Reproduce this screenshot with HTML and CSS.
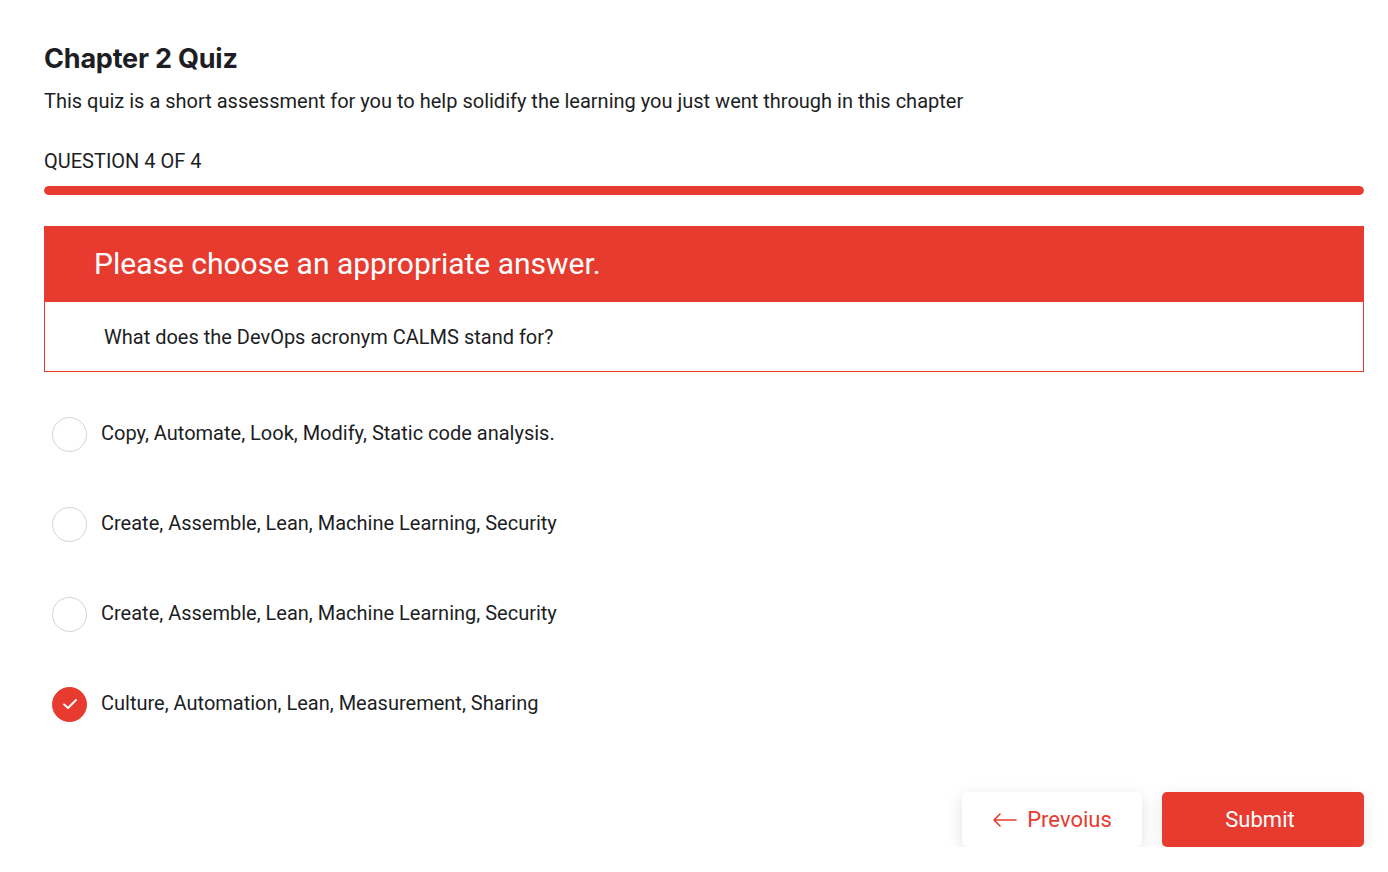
FILE: index.html
```html
<!DOCTYPE html>
<html>
<head>
<meta charset="utf-8">
<link rel="stylesheet" href="styles.css">
</head>
<body>
<main class="quiz">
  <h1 class="title">Chapter 2 Quiz</h1>
  <p class="subtitle">This quiz is a short assessment for you to help solidify the learning you just went through in this chapter</p>
  <div class="counter">QUESTION 4 OF 4</div>
  <div class="progress"><div class="progress-fill" style="width:100%"></div></div>
  <section class="question">
    <div class="question-head">Please choose an appropriate answer.</div>
    <div class="question-body">What does the DevOps acronym CALMS stand for?</div>
  </section>
  <ul class="options">
    <li class="option"><span class="radio"></span><span class="label">Copy, Automate, Look, Modify, Static code analysis.</span></li>
    <li class="option"><span class="radio"></span><span class="label">Create, Assemble, Lean, Machine Learning, Security</span></li>
    <li class="option"><span class="radio"></span><span class="label">Create, Assemble, Lean, Machine Learning, Security</span></li>
    <li class="option"><span class="radio checked"><svg width="18" height="18" viewBox="0 0 18 18"><path d="M3 9.4 L7 13 L15 5" fill="none" stroke="#fff" stroke-width="1.9" stroke-linecap="round" stroke-linejoin="round"/></svg></span><span class="label">Culture, Automation, Lean, Measurement, Sharing</span></li>
  </ul>
  <div class="actions">
    <button class="btn btn-prev"><svg width="26" height="14" viewBox="0 0 26 14"><path d="M24 7 H2 M8 1 L2 7 L8 13" fill="none" stroke="#e83b30" stroke-width="1.6" stroke-linecap="round" stroke-linejoin="round"/></svg><span>Prevoius</span></button>
    <button class="btn btn-submit">Submit</button>
  </div>
</main>
</body>
</html>
```
FILE: styles.css
```css
* { box-sizing: border-box; }
body {
  margin: 0;
  background: #fff;
  font-family: Roboto, "Liberation Sans", sans-serif;
  color: #1c1e24;
}
.quiz {
  padding: 42px 24px 0 44px;
}
.title {
  margin: 0;
  font-family: Inter, "Liberation Sans", sans-serif;
  font-weight: 700;
  font-size: 27px;
  line-height: 34px;
  letter-spacing: -0.2px;
  color: #1c1e24;
}
.subtitle {
  margin: 12px 0 0;
  font-size: 20px;
  line-height: 26px;
  color: #1c1e24;
}
.counter {
  margin-top: 36px;
  font-size: 20px;
  line-height: 22px;
  color: #1c1e24;
}
.progress {
  margin-top: 14px;
  height: 9px;
  border-radius: 5px;
  background: #f1f1f1;
  overflow: hidden;
}
.progress-fill {
  height: 100%;
  background: #e83b30;
  border-radius: 5px;
}
.question {
  margin-top: 31px;
  border: 1px solid #e83b30;
}
.question-head {
  background: #e83b30;
  color: #fff;
  height: 75px;
  padding-left: 49px;
  padding-bottom: 2px;
  display: flex;
  align-items: center;
  font-size: 30px;
}
.question-body {
  height: 69px;
  padding-left: 59px;
  display: flex;
  align-items: center;
  font-size: 20px;
}
.options {
  list-style: none;
  margin: 17px 0 0;
  padding: 0 0 0 8px;
}
.option {
  height: 90px;
  display: flex;
  align-items: center;
  gap: 14px;
  font-size: 20px;
}
.label {
  margin-top: -3px;
}
.radio {
  width: 35px;
  height: 35px;
  border-radius: 50%;
  border: 1px solid #d4d4d4;
  display: flex;
  align-items: center;
  justify-content: center;
  flex: none;
}
.radio.checked {
  background: #e83b30;
  border-color: #e83b30;
}
.actions {
  display: flex;
  justify-content: flex-end;
  gap: 20px;
  margin-top: 43px;
}
.btn {
  height: 55px;
  border: none;
  border-radius: 5px;
  font-family: Roboto, "Liberation Sans", sans-serif;
  font-size: 22px;
  display: flex;
  align-items: center;
  justify-content: center;
  cursor: pointer;
}
.btn-prev {
  width: 180px;
  background: #fff;
  color: #e83b30;
  gap: 9px;
  box-shadow: 0 4px 16px rgba(0,0,0,0.12);
}
.btn-submit {
  width: 202px;
  padding-right: 12px;
  background: #e83b30;
  color: #fff;
  box-shadow: 0 4px 16px rgba(0,0,0,0.10);
}
```
